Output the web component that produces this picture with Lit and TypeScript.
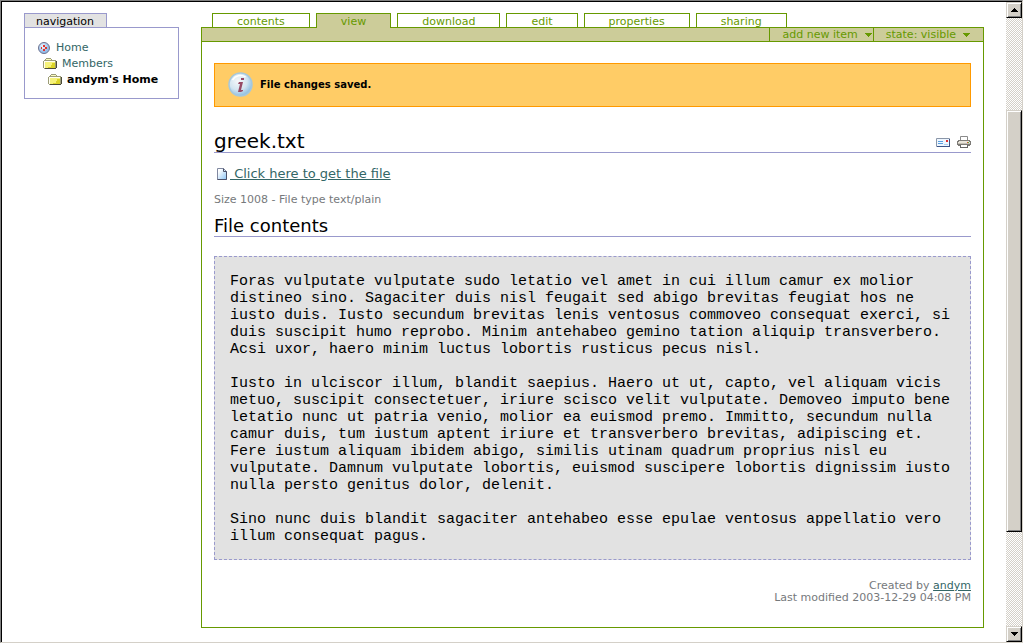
import { LitElement, html, css, svg } from "lit";
import { customElement, property } from "lit/decorators.js";

const TABS = ["contents", "view", "download", "edit", "properties", "sharing"];

const FILE_TEXT = [
  "Foras vulputate vulputate sudo letatio vel amet in cui illum camur ex molior distineo sino. Sagaciter duis nisl feugait sed abigo brevitas feugiat hos ne iusto duis. Iusto secundum brevitas lenis ventosus commoveo consequat exerci, si duis suscipit humo reprobo. Minim antehabeo gemino tation aliquip transverbero. Acsi uxor, haero minim luctus lobortis rusticus pecus nisl.",
  "Iusto in ulciscor illum, blandit saepius. Haero ut ut, capto, vel aliquam vicis metuo, suscipit consectetuer, iriure scisco velit vulputate. Demoveo imputo bene letatio nunc ut patria venio, molior ea euismod premo. Immitto, secundum nulla camur duis, tum iustum aptent iriure et transverbero brevitas, adipiscing et. Fere iustum aliquam ibidem abigo, similis utinam quadrum proprius nisl eu vulputate. Damnum vulputate lobortis, euismod suscipere lobortis dignissim iusto nulla persto genitus dolor, delenit.",
  "Sino nunc duis blandit sagaciter antehabeo esse epulae ventosus appellatio vero illum consequat pagus.",
].join("\n\n");

const ICONS: Record<string, { w: number; h: number; body: unknown }> = {
  home: {
    w: 12, h: 12,
    body: svg`<defs><radialGradient id="hg" cx=".4" cy=".35"><stop offset="0" stop-color="#f2f8ff"/><stop offset="1" stop-color="#94bce8"/></radialGradient></defs>
      <circle cx="6" cy="6" r="5.5" fill="url(#hg)" stroke="#6d7390"/>
      <path d="M5 3h2v2h-2zM7 5h2v2h-2zM5 7h2v2h-2zM3 5h1v2h-1z" fill="#e0342c"/>`,
  },
  folder: {
    w: 14, h: 12,
    body: svg`<path d="M1 2h1v-1h1v-1h5v1h1v1h4v9h-12v-1h-1v-7h1z" fill="#9c9c78"/>
      <path d="M3 1h5v1h-5zM1 3h11v7h-11z" fill="#f6f27a"/>
      <path d="M1 3h11v1h-10v6h-1z" fill="#fffff0"/>
      <path d="M3 1h5v1h-5z" fill="#fbfbc0"/>
      <path d="M9 5h3v5h-7v-1h3v-2h1z" fill="#dcd428"/>
      <path d="M2 10h11v-7h1v7h-1v1h-11z" fill="#4c4c38"/>`,
  },
  info: {
    w: 26, h: 26,
    body: svg`<defs><radialGradient id="ig" cx=".4" cy=".35" r=".65"><stop offset="0" stop-color="#f6f8fa"/><stop offset=".6" stop-color="#d3e5f0"/><stop offset="1" stop-color="#8fbfe2"/></radialGradient></defs>
      <circle cx="12.500" cy="12.500" r="11.500" fill="url(#ig)" stroke="#a6c8dc" stroke-width="1.500"/>
      <path d="M4.500 8a9.500 9.500 0 0 1 13-3" fill="none" stroke="#fff" stroke-width="1.500"/>
      <path d="M13 6h3v2h-3zM11 10h4l-2 8h2v1l-2 1h-3l2-8h-2z" fill="#974b66"/>`,
  },
  file: {
    w: 10, h: 12,
    body: svg`<defs><linearGradient id="fg" x2="1" y2="1"><stop offset=".2" stop-color="#fff"/><stop offset="1" stop-color="#8cc4f4"/></linearGradient></defs>
      <path d="M.5.500h6l3 3v8h-9z" fill="url(#fg)" stroke="#8088a0"/>
      <path d="M6.500.500v3h3v8h-9" fill="none" stroke="#4c5068"/>`,
  },
  mail: {
    w: 14, h: 9,
    body: svg`<path d="M.5.500h13v8h-13z" fill="#eef6ff" stroke="#8a96a8"/>
      <path d="M1 8.500h13M13.500 1v8" stroke="#3c5488" fill="none"/>
      <path d="M2 3.500h5M2 5.500h5" stroke="#5aa0e0"/>
      <path d="M10 2h2v2h-2z" fill="#e03030"/><path d="M8 6h4v1h-4z" fill="#a8d0f4"/>`,
  },
  print: {
    w: 14, h: 12,
    body: svg`<path d="M3.500 4.500v-4h7v4" fill="#fff" stroke="#8a8a8a"/>
      <path d="M1 4h12v1h1v4h-1v1h-12v-1h-1v-4h1z" fill="#7c7a76"/>
      <path d="M2 5h10v1h1v1h-12v-1h1z" fill="#e8e4da"/>
      <path d="M1 7h12v1h-12z" fill="#c4bfb4"/>
      <path d="M10 6h1v1h-1z" fill="#e05030"/><path d="M11 6h1v1h-1z" fill="#50b040"/>
      <path d="M3 9h8v3h-8z" fill="#666"/><path d="M4 9h6v2h-6z" fill="#fff"/>`,
  },
  caret: { w: 7, h: 4, body: svg`<path d="M0 0h7v1h-1v1h-1v1h-1v1h-1v-1h-1v-1h-1v-1h-1z" fill="#690"/>` },
  up: { w: 7, h: 4, body: svg`<path d="M3 0h1v1h1v1h1v1h1v1h-7v-1h1v-1h1v-1h1z" fill="#000"/>` },
  down: { w: 7, h: 4, body: svg`<path d="M0 0h7v1h-1v1h-1v1h-1v1h-1v-1h-1v-1h-1v-1h-1z" fill="#000"/>` },
};

@customElement("pixel-icon")
class PixelIcon extends LitElement {
  @property() name = "file";
  static styles = css`
    :host { display: inline-flex; flex: none; }
    svg { display: block; }
  `;
  render() {
    const i = ICONS[this.name];
    return html`<svg width=${i.w} height=${i.h} viewBox="0 0 ${i.w} ${i.h}" aria-hidden="true">${i.body}</svg>`;
  }
}

@customElement("scroll-rail")
class ScrollRail extends LitElement {
  static styles = css`
    :host {
      display: flex; flex-direction: column; flex: none; width: 16px;
      background: repeating-conic-gradient(#d4d0c8 0 25%, #fff 0 50%) 0 0 / 2px 2px;
    }
    .btn, .thumb {
      box-sizing: border-box; background: #d4d0c8;
      border: 1px solid; border-color: #d4d0c8 #000 #000 #d4d0c8;
      box-shadow: inset 1px 1px #fff, inset -1px -1px #808080;
    }
    .btn { height: 16px; width: 16px; padding: 0; display: flex; align-items: center; justify-content: center; }
    .before { flex: 92; }
    .thumb { flex: 422; }
    .after { flex: 94; }
  `;
  render() {
    return html`
      <button class="btn" aria-label="Scroll up"><pixel-icon name="up"></pixel-icon></button>
      <div class="before"></div><div class="thumb"></div><div class="after"></div>
      <button class="btn" aria-label="Scroll down"><pixel-icon name="down"></pixel-icon></button>
    `;
  }
}

@customElement("app-root")
class AppRoot extends LitElement {
  static styles = css`
    :host {
      display: flex; box-sizing: border-box; min-height: 100vh; padding: 0 1px 1px 0;
      background: #fff; color: #000;
      font: 11px/16px Verdana, "DejaVu Sans", sans-serif;
    }
    .frame {
      flex: 1; min-width: 0; display: flex;
      border: 1px solid; border-color: #808080 #d4d0c8 #d4d0c8 #808080;
    }
    .window { flex: 1; min-width: 0; display: flex; border: 0 solid #000; border-width: 1px 0 0 1px; }
    .page {
      flex: 1; min-width: 0; display: flex; align-items: flex-start; gap: 22px;
      padding: 11px 22px 14px;
    }
    a { color: #366; }
    .side { flex: none; width: 155px; }
    .side h2 {
      display: block; width: fit-content; box-sizing: border-box; margin: 0; padding: 0 12px 0 11px; height: 14px; line-height: 15px;
      font-size: 11px; font-weight: normal; background: #e2e2e2;
      border: 1px solid #99c; border-bottom: 0;
    }
    .tree { margin: 0; padding: 12px 12px 10px 13px; list-style: none; border: 1px solid #99c; }
    .tree a { display: flex; align-items: center; gap: 6px; text-decoration: none; }
    .lvl1 { padding-left: 5px; }
    .lvl2 { padding-left: 10px; }
    .lvl1 a, .lvl2 a { gap: 5px; }
    .tree .here { color: #000; font-weight: bold; }
    .main { flex: 1; min-width: 0; }
    .tabs { display: flex; gap: 6px; padding-left: 11px; }
    .tab {
      box-sizing: border-box; padding: 0 24px; height: 14px; line-height: 15px;
      border: 1px solid #690; border-bottom: 0; color: #690; text-decoration: none;
    }
    .tab.on { background: #cc9; margin-bottom: -1px; height: 15px; position: relative; }
    .box { border: 1px solid #690; }
    .bar { display: flex; justify-content: flex-end; height: 13px; background: #cc9; border-bottom: 1px solid #690; }
    .act {
      display: flex; align-items: center; gap: 7px; padding: 0 1px 0 12px; border: 0; border-left: 1px solid #690;
      background: none; color: #690; font: inherit; line-height: 14px;
    }
    .act.last { padding-right: 13px; }
    .content { padding: 21px 12px 23px; }
    .msg {
      display: flex; align-items: center; gap: 6px; margin-bottom: 24px; padding: 8px 13px;
      background: #fc6; border: 1px solid #f90; font-size: 10px; font-weight: bold;
    }
    .head { display: flex; justify-content: space-between; align-items: flex-end; border-bottom: 1px solid #99c; }
    h1 { margin: 0; font-size: 20px; line-height: 21px; font-weight: normal; }
    .tools { display: flex; align-items: center; gap: 7px; padding-bottom: 4px; }
    .tools a { display: flex; }
    .get { display: flex; align-items: center; gap: 3px; margin: 12px 0 0; padding-left: 3px; font-size: 13px; line-height: 17px; }
    .get a { white-space: pre; }
    .meta { margin: 12px 0 0; font-size: 11px; line-height: 12px; color: #76797c; }
    .sub { margin: 9px 0 19px; font-size: 18px; line-height: 21px; font-weight: normal; border-bottom: 1px solid #99c; }
    pre {
      margin: 0; padding: 16px 15px 14px; background: #e2e2e2; border: 1px dashed #99c;
      font: 15px/17px "Courier New", "Liberation Mono", monospace; white-space: pre-wrap;
    }
    .by { margin: 20px 0 0; text-align: right; font-size: 11px; line-height: 12px; color: #76797c; }
  `;

  render() {
    return html`
      <div class="frame"><div class="window">
      <div class="page">
        <nav class="side">
          <h2>navigation</h2>
          <ul class="tree">
            <li><a href="#"><pixel-icon name="home"></pixel-icon>Home</a></li>
            <li class="lvl1"><a href="#"><pixel-icon name="folder"></pixel-icon>Members</a></li>
            <li class="lvl2"><a class="here" href="#"><pixel-icon name="folder"></pixel-icon>andym's Home</a></li>
          </ul>
        </nav>
        <main class="main">
          <div class="tabs">
            ${TABS.map((t) => html`<a href="#" class="tab ${t === "view" ? "on" : ""}">${t}</a>`)}
          </div>
          <div class="box">
            <div class="bar">
              <button class="act">add new item<pixel-icon name="caret"></pixel-icon></button>
              <button class="act last">state: visible<pixel-icon name="caret"></pixel-icon></button>
            </div>
            <div class="content">
              <div class="msg"><pixel-icon name="info"></pixel-icon>File changes saved.</div>
              <div class="head">
                <h1>greek.txt</h1>
                <div class="tools">
                  <a href="#" aria-label="Send this"><pixel-icon name="mail"></pixel-icon></a>
                  <a href="#" aria-label="Print this"><pixel-icon name="print"></pixel-icon></a>
                </div>
              </div>
              <p class="get"><pixel-icon name="file"></pixel-icon><a href="#"> Click here to get the file</a></p>
              <p class="meta">Size 1008 - File type text/plain</p>
              <h2 class="sub">File contents</h2>
              <pre>${FILE_TEXT}</pre>
              <p class="by">Created by <a href="#">andym</a><br />Last modified 2003-12-29 04:08 PM</p>
            </div>
          </div>
        </main>
      </div>
      <scroll-rail></scroll-rail>
      </div></div>
    `;
  }
}
